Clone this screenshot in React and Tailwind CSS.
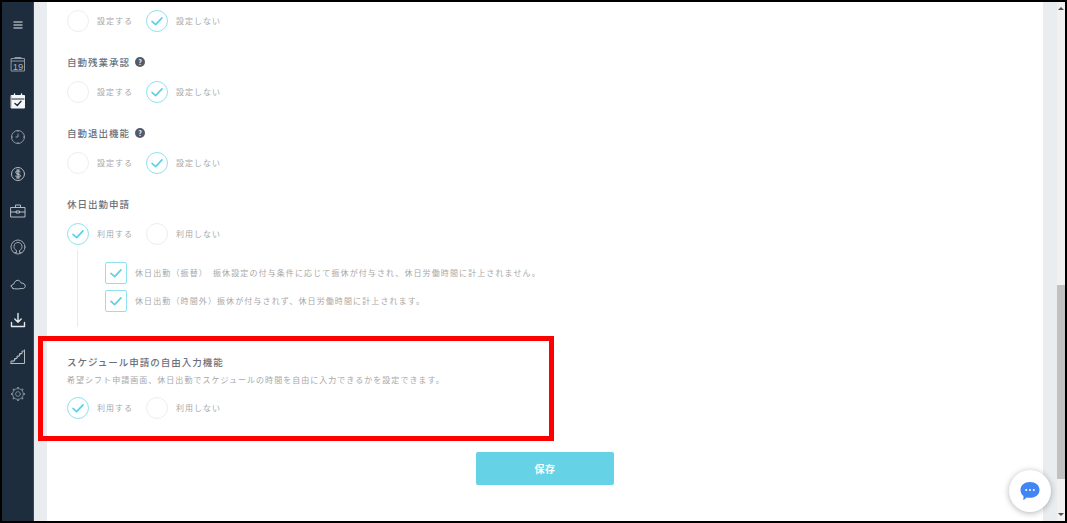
const FONT = "font-['Noto_Sans_CJK_JP','Noto_Sans',sans-serif]";

function Check({ className }) {
  return (
    <svg viewBox="0 0 22 22" className={className} fill="none">
      <path d="M5.5 11.5 L9.5 15 L16.5 7.5" stroke="#5bd0e6" strokeWidth="1.8" strokeLinecap="round" strokeLinejoin="round" />
    </svg>
  );
}

function Radio({ on, label }) {
  return (
    <div className="flex items-center w-[79px]">
      <div className={`w-[22px] h-[22px] rounded-full border shrink-0 ${on ? "border-[#8fe3f0]" : "border-[#eceef0]"}`}>
        {on && <Check className="w-[20px] h-[20px]" />}
      </div>
      <span className="ml-[8px] text-[8px] tracking-[1px] text-[#a8a8a8] whitespace-nowrap leading-none">{label}</span>
    </div>
  );
}

function RadioRow({ first, second, on, className = "" }) {
  return (
    <div className={`flex h-[22px] ${className}`}>
      <Radio on={on === 0} label={first} />
      <Radio on={on === 1} label={second} />
    </div>
  );
}

function Title({ children, help, className = "" }) {
  return (
    <div className={`flex items-center h-[14px] pt-[2px] text-[9.5px] font-medium tracking-[1px] text-[#6a717b] leading-none ${className}`}>
      {children}
      {help && (
        <span className="ml-[5px] -mt-[2px] w-[10px] h-[10px] rounded-full bg-[#525a6b] text-white text-[7px] font-bold flex items-center justify-center tracking-normal">?</span>
      )}
    </div>
  );
}

function CheckLine({ children }) {
  return (
    <div className="flex items-center h-[22px]">
      <div className="w-[22px] h-[22px] rounded-[2px] border border-[#8fe3f0] shrink-0">
        <Check className="w-[20px] h-[20px]" />
      </div>
      <span className="ml-[8px] text-[8px] tracking-[1.11px] text-[#a8a8a8] whitespace-pre leading-none">{children}</span>
    </div>
  );
}

const stroke = { fill: "none", strokeWidth: 1, strokeLinecap: "round", strokeLinejoin: "round" };

function NavIcon({ color = "#aab2ba", children }) {
  return (
    <div className="h-[36.6px] flex items-center justify-center">
      <svg viewBox="0 0 16 16" className="w-[16px] h-[16px]" stroke={color} {...stroke}>{children}</svg>
    </div>
  );
}

function Sidebar() {
  return (
    <div className="w-[31px] shrink-0 bg-[#1e2d3d] flex flex-col border-r border-[#3a4756] box-content">
      <div className="h-[44px] flex items-center justify-center pt-[1px]">
        <svg viewBox="0 0 10 8" className="w-[10px] h-[8px]" fill="none" stroke="#e6e9ec" strokeWidth="1.1">
          <path d="M0.5 1 H9.5 M0.5 4 H9.5 M0.5 7 H9.5" />
        </svg>
      </div>
      <NavIcon color="#8f99a4">
        <path d="M1.5 2.5 H14.5 V15 H1.5 Z M1.5 5 H14.5 M5 1.5 H11" />
        <text x="8" y="13.7" textAnchor="middle" fontSize="9.5" fill="#a6afb8" stroke="none" fontFamily="Liberation Sans">19</text>
      </NavIcon>
      <NavIcon color="#f4f6f7">
        <path d="M1.5 2.5 H14.5 V15 H1.5 Z" fill="#f4f6f7" />
        <path d="M2 6 H14" stroke="#1e2d3d" />
        <path d="M4.5 1 V3.5 M11.5 1 V3.5" strokeWidth="1.4" />
        <path d="M5 10.5 L7.3 12.5 L11 8.3" stroke="#1e2d3d" strokeWidth="1.4" />
      </NavIcon>
      <NavIcon color="#8f99a4">
        <circle cx="8" cy="8" r="6.5" />
        <path d="M8 5 V8 H6" />
        <path d="M8 2 V2.6 M8 13.4 V14 M2 8 H2.6 M13.4 8 H14" />
      </NavIcon>
      <NavIcon color="#b4bbc3">
        <circle cx="8" cy="8" r="6.5" />
        <path d="M10.3 5.6 C9.8 4.6 5.6 4.3 5.6 6.2 C5.6 8.3 10.5 7.6 10.5 9.9 C10.5 11.7 6.2 11.5 5.5 10.3 M7.2 3.5 V12.5 M8.8 3.5 V12.5" />
      </NavIcon>
      <NavIcon color="#b4bbc3">
        <path d="M1 4.5 H15 V14 H1 Z M5.5 4.5 V2 H10.5 V4.5 M1 9 H6.5 M9.5 9 H15 M6.5 8 H9.5 V10 H6.5 Z" />
      </NavIcon>
      <NavIcon color="#a0a9b2">
        <circle cx="8" cy="8" r="7" />
        <path d="M5 13.5 H6.5 V11.5 C4.5 10.5 4 9 4 7.5 C4 5 5.8 3.5 8 3.5 C10.2 3.5 12 5 12 7.5 C12 9 11.5 10.5 9.5 11.5 V13.5 H11" />
      </NavIcon>
      <NavIcon color="#b4bbc3">
        <path d="M3 12.5 L0.8 9.8 L3.8 8 C4.4 5.5 6.5 3.7 8.6 4.4 C10 4.9 10.6 6 11 7 C13.6 7 15.6 8.5 15.2 10.5 C14.8 12.5 13 12.9 11 12.5 C9 13.1 5 13.1 3 12.5 Z" />
      </NavIcon>
      <NavIcon color="#e6e9ec">
        <path d="M8 1.5 V10 M4.8 7 L8 10.2 L11.2 7" strokeWidth="1.4" />
        <path d="M1.5 10.5 V14.5 H14.5 V10.5" strokeWidth="1.4" />
      </NavIcon>
      <NavIcon color="#b4bbc3">
        <path d="M1 14.5 H14.5 V1 M1 14.5 V12 H4.5 V9.5 H7 V7 H9.5 V4.5 H12 V2 H14.5" />
        <path d="M2.5 13 L12.5 3.8" strokeWidth="0.7" />
      </NavIcon>
      <NavIcon color="#7a8692">
        <circle cx="8" cy="8" r="2.4" />
        <circle cx="8" cy="8" r="5.4" />
        <path d="M8 1 V2.6 M8 13.4 V15 M1 8 H2.6 M13.4 8 H15 M3.05 3.05 L4.2 4.2 M11.8 11.8 L12.95 12.95 M3.05 12.95 L4.2 11.8 M11.8 4.2 L12.95 3.05" strokeWidth="2" strokeLinecap="butt" />
      </NavIcon>
    </div>
  );
}

function Main() {
  return (
    <div className="flex-1 bg-white flex flex-col pl-[20px] pt-[8px] min-w-0">
      <RadioRow first="設定する" second="設定しない" on={1} />
      <Title help className="mt-[23px]">自動残業承認</Title>
      <RadioRow first="設定する" second="設定しない" on={1} className="mt-[12px]" />
      <Title help className="mt-[23px]">自動退出機能</Title>
      <RadioRow first="設定する" second="設定しない" on={1} className="mt-[12px]" />
      <Title className="mt-[23px]">休日出勤申請</Title>
      <RadioRow first="利用する" second="利用しない" on={0} className="mt-[12px]" />
      <div className="ml-[10px] mt-[5px] h-[77px] border-l border-[#e8ebee] pl-[27px] pt-[12px] flex flex-col gap-[6px]">
        <CheckLine>{"休日出勤（振替）　振休設定の付与条件に応じて振休が付与され、休日労働時間に計上されません。"}</CheckLine>
        <CheckLine>{"休日出勤（時間外）振休が付与されず、休日労働時間に計上されます。"}</CheckLine>
      </div>
      <Title className="mt-[28px]">スケジュール申請の自由入力機能</Title>
      <p className="mt-[5px] text-[8px] tracking-[1.03px] text-[#a8a8a8] leading-[12px] whitespace-nowrap">
        希望シフト申請画面、休日出勤でスケジュールの時間を自由に入力できるかを設定できます。
      </p>
      <RadioRow first="利用する" second="利用しない" on={0} className="mt-[11px]" />
      <div className="mt-[33px] flex justify-center -ml-[20px]">
        <button className="w-[138px] h-[33px] rounded-[2px] bg-[#65d3e5] text-white text-[10px] font-bold tracking-[0.5px] flex items-center justify-center">
          保存
        </button>
      </div>
    </div>
  );
}

function Scrollbar() {
  return (
    <div className="w-[8px] shrink-0 bg-[#f1f1f1] flex flex-col items-center">
      <div className="h-[283px] w-full pt-[5px] flex justify-center shrink-0">
        <div className="w-0 h-0 border-x-[3px] border-x-transparent border-b-[3px] border-b-[#505050]" />
      </div>
      <div className="h-[194px] w-full bg-[#c1c1c1] shrink-0" />
      <div className="flex-1 w-full flex items-end justify-center pb-[5px]">
        <div className="w-0 h-0 border-x-[3px] border-x-transparent border-t-[3px] border-t-[#505050]" />
      </div>
    </div>
  );
}

export default function App() {
  return (
    <div className={`relative w-[1067px] h-[523px] bg-black p-[2px] overflow-hidden ${FONT}`}>
      <div className="flex h-full w-full bg-[#e9edf0]">
        <Sidebar />
        <div className="w-[13px] shrink-0 bg-[#e9edf0]" />
        <Main />
        <div className="w-[14px] shrink-0 bg-[#e9edf0]" />
        <Scrollbar />
      </div>
      <div className="absolute left-[38px] top-[336px] w-[516px] h-[105px] border-[5px] border-[#ff0000]" />
      <div className="absolute left-[1009px] top-[470px] w-[42px] h-[42px] rounded-full bg-white shadow-[0_1px_6px_rgba(0,0,0,0.3)] flex items-center justify-center">
        <svg viewBox="0 0 20 20" className="w-[20px] h-[20px]">
          <path d="M10 1 C15.5 1 19.5 4.2 19.5 9 C19.5 13.8 15.5 16.8 10 16.8 C8.8 16.8 7.6 16.7 6.6 16.4 C5.6 17.6 4.3 18.6 3.2 19 C3.6 17.6 3.6 16.2 3.4 15 C1.6 13.6 0.5 11.5 0.5 9 C0.5 4.2 4.5 1 10 1 Z" fill="#4285f4" />
          <circle cx="6.2" cy="9" r="1" fill="#fff" />
          <circle cx="10" cy="9" r="1" fill="#fff" />
          <circle cx="13.8" cy="9" r="1" fill="#fff" />
        </svg>
      </div>
    </div>
  );
}
